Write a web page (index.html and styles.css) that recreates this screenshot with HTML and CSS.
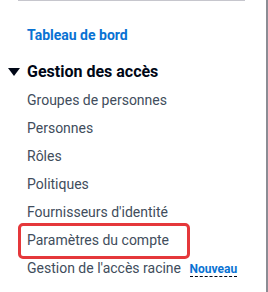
FILE: index.html
```html
<!DOCTYPE html>
<html lang="fr">
<head>
    <meta charset="UTF-8">
    <meta name="viewport" content="width=device-width, initial-scale=1.0">
    <title>IAM</title>
    <link rel="stylesheet" href="styles.css">
</head>
<body>
    <div class="sidebar">
        <div class="top-rule"></div>

        <nav class="nav">
            <a class="nav-home" href="#">Tableau de bord</a>

            <div class="section-title">
                <svg class="caret" width="12" height="8" viewBox="0 0 12 8"><polygon points="0,0 12,0 6,8" fill="#000716"/></svg>
                <span>Gestion des accès</span>
            </div>

            <ul class="nav-list">
                <li><a href="#">Groupes de personnes</a></li>
                <li><a href="#">Personnes</a></li>
                <li><a href="#">Rôles</a></li>
                <li><a href="#">Politiques</a></li>
                <li><a href="#">Fournisseurs d'identité</a></li>
                <li class="marked"><a href="#">Paramètres du compte</a><span class="highlight"></span></li>
                <li><a href="#">Gestion de l'accès racine</a> <span class="badge-new">Nouveau</span></li>
            </ul>
        </nav>
    </div>
</body>
</html>
```

FILE: styles.css
```css
/* Sidebar navigation */
body {
    margin: 0;
    padding: 0;
    background-color: #fff;
    font-family: Roboto, Arial, sans-serif;
    color: #000716;
}

.sidebar {
    height: 292px;
    border-right: 2px solid #8c8c94;
    box-sizing: border-box;
    overflow: hidden;
}

.top-rule {
    margin: 0 21px 0 18px;
    border-top: 1px solid #c6c6cd;
}

.nav {
    padding: 24px 0 0 27px;
}

.nav a {
    text-decoration: none;
}

.nav-home {
    display: block;
    font-size: 14px;
    line-height: 20px;
    font-weight: 700;
    color: #0972d3;
}

.section-title {
    display: flex;
    align-items: center;
    margin: 15px 0 0 -19px;
    font-size: 16px;
    line-height: 24px;
    font-weight: 700;
    color: #000716;
}

.caret {
    margin-right: 7px;
}

.nav-list {
    list-style: none;
    margin: 2px 0 0 0;
    padding: 0;
}

.nav-list li {
    position: relative;
    font-size: 14px;
    line-height: 28px;
}

.nav-list a {
    color: #414d5c;
}

/* red annotation box around one item */
.highlight {
    position: absolute;
    left: -9px;
    top: -3px;
    width: 172px;
    height: 36px;
    border: 3px solid #e5383b;
    border-radius: 5px;
    box-sizing: border-box;
}

.badge-new {
    margin-left: 5px;
    font-size: 12px;
    font-weight: 700;
    color: #0972d3;
    border-bottom: 1px dashed #000716;
}
```
